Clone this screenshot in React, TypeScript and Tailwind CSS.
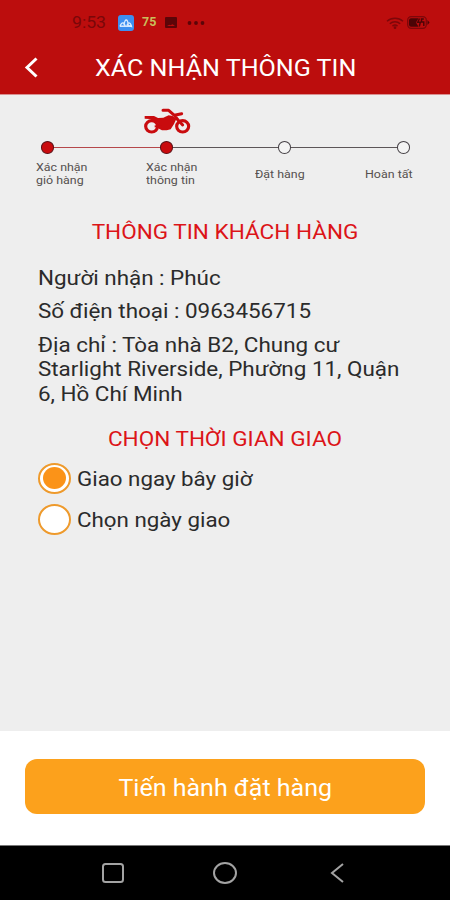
import React from 'react';

const steps = [
    { label: ['Xác nhận', 'giỏ hàng'], done: true },
    { label: ['Xác nhận', 'thông tin'], done: true },
    { label: ['Đặt hàng'], done: false },
    { label: ['Hoàn tất'], done: false },
];

const labelClass = [
    'ml-[36px] w-[110px]',
    'w-[109px]',
    'w-[110px] pt-[7px]',
    'pt-[7px]',
];

function StatusBar() {
    return (
        <div className="flex h-[44px] items-center pt-[1px] text-[#5c0508]">
            <span className="ml-[72px] w-[46px] origin-left scale-x-[1.07] pt-[2px] text-[16.5px] leading-none text-[#7a0709]">9:53</span>
            <svg className="size-4" viewBox="0 0 16 16">
                <rect width="16" height="16" rx="3" fill="#3d8ff0" />
                <path d="M2 11.5c.8-2.4 1.8-3.6 2.8-3.6S6.600 9 7 11m-1-1c.5-3.500 1.300-5 2.200-5s1.800 2 2 5m-1 0c.4-1.500 1-2.100 1.700-2.100 1.100 0 2 1.200 2.600 3.600z" fill="none" stroke="#dcecff" strokeWidth="1.300" />
                <path d="M2 11.200h12" stroke="#dcecff" strokeWidth="1.500" />
            </svg>
            <span className="ml-[8px] w-[23px] text-[12.5px] font-bold leading-none text-[#c9bd5b]">75</span>
            <svg className="h-[11px] w-3" viewBox="0 0 12 11">
                <path fillRule="evenodd" d="M1 0h10a1 1 0 0 1 1 1v9a1 1 0 0 1-1 1H1a1 1 0 0 1-1-1V1a1 1 0 0 1 1-1zm1 9h8L7.500 7.200 5.500 8.300 4.300 7.700z" fill="currentColor" />
            </svg>
            <svg className="ml-[10px] h-1 w-[18px]" viewBox="0 0 18 4">
                <circle cx="2.500" cy="2" r="1.900" fill="currentColor" />
                <circle cx="9" cy="2" r="1.900" fill="currentColor" />
                <circle cx="15.500" cy="2" r="1.900" fill="currentColor" />
            </svg>
            <svg className="ml-auto h-[12px] w-[18px]" viewBox="0 0 18 12" fill="none" stroke="#7d070a" strokeWidth="1.500">
                <path d="M1 4.200C5.500.2 12.500.2 17 4.200M3.800 6.700c3-2.700 7.400-2.700 10.400 0M6.500 9.100c1.500-1.300 3.500-1.300 5 0" />
                <circle cx="9" cy="10.700" r=".6" />
            </svg>
            <svg className="ml-[3px] mr-[20px] h-[13px] w-[23px]" viewBox="0 0 23 13">
                <rect x=".7" y=".7" width="18.600" height="11.600" rx="3.500" fill="none" stroke="#7d070a" strokeWidth="1.300" />
                <path d="M4 2.200h7.500L9 6.500l2.500 4.300H4a2 2 0 0 1-2-2V4.200a2 2 0 0 1 2-2z" fill="#4a0406" />
                <path d="m12.500 2.500-1.800 3.700h2.600l-1 4.300M16.800 3h-2.300v3h2.300v4" fill="none" stroke="#4a0406" strokeWidth="1.400" />
                <path d="M20.500 4v5l2-2.500z" fill="#4a0406" />
            </svg>
        </div>
    );
}

function Motorbike() {
    return (
        <svg className="ml-[143px] h-[26px] w-[48px]" viewBox="369 22 144 78" fill="none" stroke="#c90b0e">
            <ellipse cx="395" cy="77" rx="18" ry="17" strokeWidth="9.500" />
            <ellipse cx="488" cy="77" rx="18" ry="17" strokeWidth="9.500" />
            <path d="M374 46h28l12 6 16-1 16-7 12 2 11 9-7 15-10 16-12 3h-14l-9-5-3-16-10-8-14-5-16-1z" fill="#c90b0e" stroke="none" />
            <path d="M429 29h17l17 15 22-5M463 44l11 14 14 15" strokeWidth="9" strokeLinecap="round" strokeLinejoin="round" />
            <path d="M404 77h22" strokeWidth="6" />
        </svg>
    );
}

function Stepper() {
    return (
        <div className="h-[123px] pt-[13px]">
            <Motorbike />
            <div className="ml-[41px] mt-[7px] flex items-center">
                {steps.map((step, i) => (
                    <React.Fragment key={i}>
                        {i > 0 && <div className={`h-[1.5px] w-[105.7px] ${i === 1 ? 'bg-[#b5474a]' : 'bg-[#5c5658]'}`} />}
                        <div className={`h-[12.5px] w-[13px] rounded-[50%] border-[1.5px] ${step.done ? 'border-[#5a1015] bg-[#c90b0e]' : 'border-[#454045] bg-[#f4f4f4]'}`} />
                    </React.Fragment>
                ))}
            </div>
            <div className="mt-[7px] flex text-[11px] leading-[13.5px] text-[#55504f]">
                {steps.map((step, i) => (
                    <div key={i} className={labelClass[i]}>
                        {step.label.map((line) => (
                            <p key={line} className="origin-left scale-x-[1.13] whitespace-nowrap">{line}</p>
                        ))}
                    </div>
                ))}
            </div>
        </div>
    );
}

function Radio({ checked, label }: { checked?: boolean; label: string }) {
    return (
        <div className="flex h-[41.5px] items-center">
            <div className="flex h-[31px] w-[33px] items-center justify-center rounded-[50%] border-2 border-[#ee9a2c] bg-white">
                {checked && <div className="h-[22px] w-[23px] rounded-[50%] bg-[#fb9318]" />}
            </div>
            <span className="ml-[6px] origin-left scale-x-[1.08] whitespace-nowrap pt-[2px]">{label}</span>
        </div>
    );
}

export default function App() {
    return (
        <div className="flex h-[900px] w-[450px] flex-col overflow-hidden bg-[#eeeeee] font-['Roboto',sans-serif] text-[20.7px] text-[#2b2b2b]">
            <header className="h-[95px] border-b border-[#d98f90] bg-[#bc0d0d]">
                <StatusBar />
                <div className="flex h-[46px] items-center text-white">
                    <svg className="ml-[24px] h-[21px] w-[15px]" viewBox="0 0 15 21" fill="none" stroke="currentColor" strokeWidth="3">
                        <path d="M12.500 1.500 3 10.500l9.500 9" />
                    </svg>
                    <h1 className="ml-[56px] origin-left scale-x-[1.092] whitespace-nowrap pt-[4px] text-[23px] font-normal">XÁC NHẬN THÔNG TIN</h1>
                </div>
            </header>

            <main className="flex-1">
                <Stepper />
                <h2 className="scale-x-[1.09] text-center leading-[28px] text-[#dc1418]">THÔNG TIN KHÁCH HÀNG</h2>
                <div className="origin-left scale-x-[1.084] pl-[35px] pt-[19.5px] leading-[24.3px]">
                    <p>Người nhận : Phúc</p>
                    <p className="mt-[9.500px]">Số điện thoại : 0963456715</p>
                    <p className="mt-[9.500px] whitespace-nowrap">
                        Địa chỉ : Tòa nhà B2, Chung cư<br />
                        Starlight Riverside, Phường 11, Quận<br />
                        6, Hồ Chí Minh
                    </p>
                </div>
                <h2 className="mt-[19.5px] scale-x-[1.09] text-center leading-[28px] text-[#dc1418]">CHỌN THỜI GIAN GIAO</h2>
                <div className="pl-[38px] pt-[4px]">
                    <Radio checked label="Giao ngay bây giờ" />
                    <Radio label="Chọn ngày giao" />
                </div>
            </main>

            <div className="h-[114px] bg-white px-[25px] pt-[28px]">
                <button className="flex h-[54.5px] w-full items-center justify-center rounded-[12px] bg-[#fca11c] text-white">
                    <span className="scale-x-[1.087] pt-[5px] text-[23px]">Tiến hành đặt hàng</span>
                </button>
            </div>

            <nav className="flex h-[55px] items-center border-t border-[#777777] bg-black text-[#a3a3a3]">
                <svg className="ml-[102px] h-[20px] w-[22px]" viewBox="0 0 22 20" fill="none" stroke="currentColor" strokeWidth="2">
                    <rect x="1" y="1" width="20" height="18" rx="2.500" />
                </svg>
                <svg className="ml-[89px] h-[22px] w-[24px]" viewBox="0 0 24 22" fill="none" stroke="currentColor" strokeWidth="2">
                    <ellipse cx="12" cy="11" rx="11" ry="10" />
                </svg>
                <svg className="ml-[93px] h-[20px] w-[14px]" viewBox="0 0 14 20" fill="none" stroke="currentColor" strokeWidth="2">
                    <path d="M13 1 2 10l11 9" />
                </svg>
            </nav>
        </div>
    );
}
